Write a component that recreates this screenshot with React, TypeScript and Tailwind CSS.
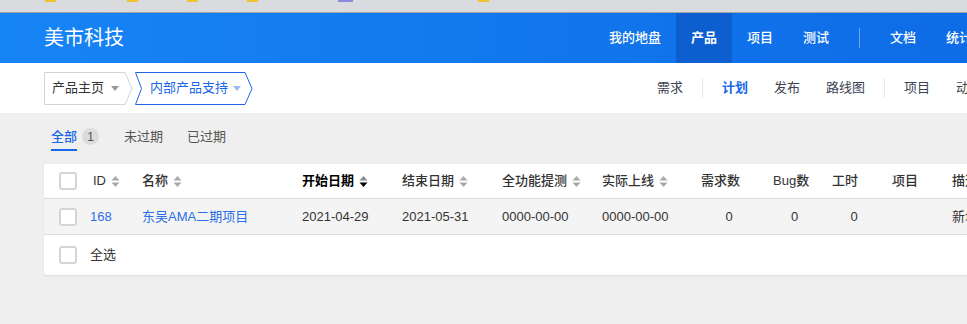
const font = "font-['Liberation_Sans','Noto_Sans_CJK_SC',sans-serif]";

function Caret({ color }: { color: string }) {
  return (
    <svg width="8" height="5" viewBox="0 0 8 5" className="ml-[7px]">
      <path d="M0 0 L8 0 L4 5 Z" fill={color} />
    </svg>
  );
}

function Sort({ active }: { active?: boolean }) {
  return (
    <svg width="9" height="13" viewBox="0 0 9 13" className="ml-[5px]">
      <path d="M0.5 5.5 L4.5 1 L8.5 5.5 Z" fill={active ? "#8a8a8a" : "#aaaaaa"} />
      <path d="M0.5 7.5 L4.5 12 L8.5 7.5 Z" fill={active ? "#000000" : "#aaaaaa"} />
    </svg>
  );
}

function Check() {
  return <span className="block w-[18px] h-[18px] rounded-[3px] border-2 border-[#d5d5d5] bg-white" />;
}

const cols = "grid grid-cols-[41px_49px_160px_100px_100px_100px_99px_72px_59px_60px_60px_200px]";

export default function App() {
  const heads: { t: string; sort?: boolean; active?: boolean }[] = [
    { t: "ID", sort: true },
    { t: "名称", sort: true },
    { t: "开始日期", sort: true, active: true },
    { t: "结束日期", sort: true },
    { t: "全功能提测", sort: true },
    { t: "实际上线", sort: true },
    { t: "需求数" },
    { t: "Bug数" },
    { t: "工时" },
    { t: "项目" },
    { t: "描述" },
  ];

  return (
    <div className={`w-screen h-[324px] overflow-hidden bg-[#efefef] text-[13px] text-[#3c4353] ${font}`}>
      {/* browser strip */}
      <div className="h-[12px] bg-[#dadbdf] flex items-start">
        <span className="ml-[45px] w-[11px] h-[2px] bg-[#f2c230]" />
        <span className="ml-[71px] w-[11px] h-[2px] bg-[#f2c230]" />
        <span className="ml-[49px] w-[11px] h-[2px] bg-[#f2c230]" />
        <span className="ml-[49px] w-[11px] h-[2px] bg-[#f2c230]" />
        <span className="ml-[80px] w-[15px] h-[2px] bg-[#8a8ae0]" />
        <span className="ml-[125px] w-[11px] h-[2px] bg-[#f2c230]" />
      </div>
      <div className="h-px bg-[#a3a3a6]" />

      {/* header */}
      <div className="h-[50px] bg-gradient-to-r from-[#1784f6] to-[#0e6ce6] flex items-center text-white">
        <div className="ml-[44px] w-[80px] shrink-0 text-[20px] leading-none">美市科技</div>
        <nav className="ml-[470px] flex items-stretch h-full shrink-0 font-medium">
          <a className="px-[15px] flex items-center">我的地盘</a>
          <a className="px-[15px] flex items-center bg-[#0d5ecf] font-bold">产品</a>
          <a className="px-[15px] flex items-center">项目</a>
          <a className="px-[15px] flex items-center">测试</a>
          <span className="mx-[15px] self-center w-px h-[20px] bg-white/40" />
          <a className="px-[15px] flex items-center">文档</a>
          <a className="px-[15px] flex items-center">统计</a>
        </nav>
      </div>

      {/* sub nav */}
      <div className="h-[50px] bg-white flex items-center">
        <div className="ml-[44px] flex items-center shrink-0">
          <div className="relative w-[89px] h-[33px] flex items-center pl-[8px] text-[#333]">
            <svg width="89" height="33" className="absolute inset-0">
              <path d="M0.5 0.5 H81 L88 16.5 L81 32.5 H0.5 Z" fill="white" stroke="#cfd3dc" />
            </svg>
            <span className="relative">产品主页</span>
            <span className="relative"><Caret color="#999" /></span>
          </div>
          <div className="relative ml-[2px] w-[118px] h-[33px] flex items-center pl-[15px] text-[#1a66e6]">
            <svg width="118" height="33" className="absolute inset-0">
              <path d="M0.5 0.5 H110 L117 16.5 L110 32.5 H0.5 L6.5 16.5 Z" fill="white" stroke="#1a66e6" />
            </svg>
            <span className="relative">内部产品支持</span>
            <span className="relative -ml-[2px]"><Caret color="#9cb8ec" /></span>
          </div>
        </div>
        <div className="ml-[391px] flex items-center shrink-0">
          <a className="px-[13px]">需求</a>
          <span className="mx-[6px] w-px h-[20px] bg-[#e8e8e8]" />
          <a className="px-[13px] text-[#1a66e6] font-bold">计划</a>
          <a className="px-[13px]">发布</a>
          <a className="px-[13px]">路线图</a>
          <span className="mx-[6px] w-px h-[20px] bg-[#e8e8e8]" />
          <a className="px-[13px]">项目</a>
          <a className="px-[13px]">动态</a>
        </div>
      </div>

      {/* tabs */}
      <div className="h-[51px] flex items-start pl-[51px] pt-[14px]">
        <div className="flex items-center">
          <span className="text-[#1a66e6] font-medium border-b-2 border-[#1a66e6] pb-[3px] leading-[19px]">全部</span>
          <span className="ml-[5px] -mt-[5px] w-[17px] h-[17px] rounded-full bg-[#dcdcdc] flex items-center justify-center text-[12px] text-[#555]">1</span>
        </div>
        <span className="ml-[25px] leading-[19px] text-[#555]">未过期</span>
        <span className="ml-[24px] leading-[19px] text-[#555]">已过期</span>
      </div>

      {/* table card */}
      <div className="ml-[44px] w-[1100px] bg-white rounded-[3px] shadow-[0_1px_2px_rgba(0,0,0,0.08)]">
        <div className={`${cols} h-[35px] items-center border-b border-[#dcdcdc] font-medium text-[#333]`}>
          <div className="pl-[15px]"><Check /></div>
          {heads.map((h) => (
            <div key={h.t} className={`pl-[8px] flex items-center ${h.active ? "text-black font-bold" : ""}`}>
              {h.t}
              {h.sort && <Sort active={h.active} />}
            </div>
          ))}
        </div>
        <div className={`${cols} h-[36px] items-center bg-[#f4f4f4] border-b border-[#dcdcdc] text-[#333]`}>
          <div className="pl-[15px]"><Check /></div>
          <div className="pl-[5px] text-[#2b6ee8]">168</div>
          <div className="pl-[8px] text-[#2b6ee8]">东吴AMA二期项目</div>
          <div className="pl-[8px]">2021-04-29</div>
          <div className="pl-[8px]">2021-05-31</div>
          <div className="pl-[8px]">0000-00-00</div>
          <div className="pl-[8px]">0000-00-00</div>
          <div className="text-center">0</div>
          <div className="text-center">0</div>
          <div className="text-center">0</div>
          <div />
          <div className="pl-[8px]">新增</div>
        </div>
        <div className="h-[40px] flex items-center pl-[15px] text-[#333]">
          <Check />
          <span className="ml-[13px]">全选</span>
        </div>
      </div>
    </div>
  );
}
